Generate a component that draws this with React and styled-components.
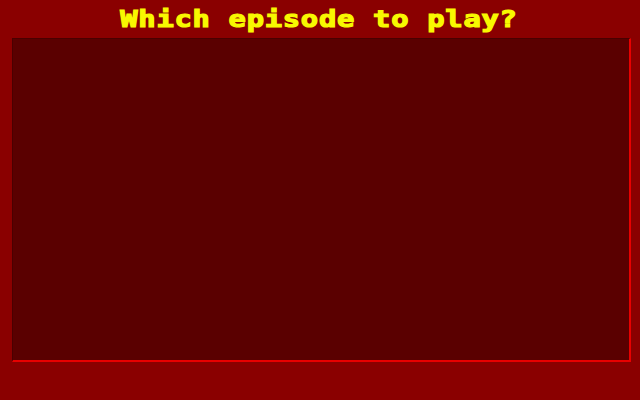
import React from "react";
import styled, { createGlobalStyle } from "styled-components";

const Global = createGlobalStyle`
  html, body { margin: 0; padding: 0; background: #8a0000; }
  #root { width: 640px; height: 400px; }
`;

const Screen = styled.div`
  width: 640px;
  height: 400px;
  background: #8a0000;
  display: flex;
  flex-direction: column;
  box-sizing: border-box;
  padding: 0 9px 38px 12px;
`;

const TitleBar = styled.div`
  height: 38px;
  display: flex;
  align-items: center;
  justify-content: center;
`;

const Title = styled.h1`
  margin: 0;
  font-family: "DejaVu Sans Mono", "Liberation Mono", monospace;
  font-weight: bold;
  font-size: 23px;
  letter-spacing: 0.6px;
  color: #f8f800;
  -webkit-text-stroke: 1.2px #f8f800;
  line-height: 1;
  white-space: nowrap;
  transform: translate(-3px, 0) scaleX(1.25);
`;

const Panel = styled.div`
  flex: 1;
  background: #5a0000;
  border-top: 1px solid #4a0000;
  border-left: 1px solid #4a0000;
  border-right: 2px solid #e80000;
  border-bottom: 2px solid #e80000;
`;

export default function App() {
  return (
    <>
      <Global />
      <Screen>
        <TitleBar>
          <Title>Which episode to play?</Title>
        </TitleBar>
        <Panel />
      </Screen>
    </>
  );
}
